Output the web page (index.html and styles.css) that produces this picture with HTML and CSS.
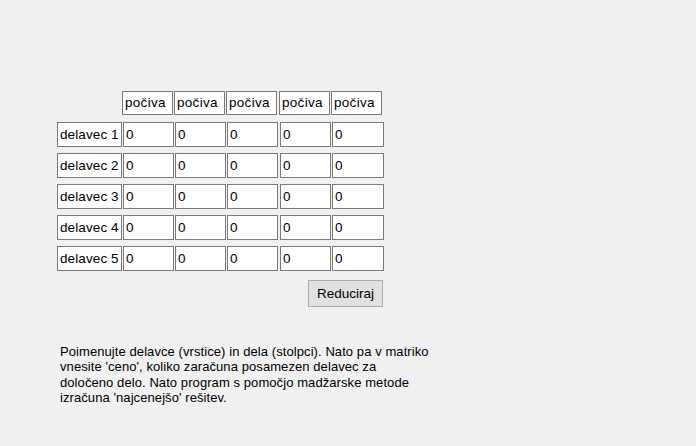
FILE: index.html
```html
<!DOCTYPE html>
<html lang="sl">
<head>
<meta charset="utf-8">
<title>Madžarska metoda</title>
<link rel="stylesheet" href="styles.css">
</head>
<body>
<div class="form">
  <div class="matrix">
    <div class="corner"></div>
    <div class="hdr">počiva</div>
    <div class="hdr">počiva</div>
    <div class="hdr">počiva</div>
    <div class="hdr">počiva</div>
    <div class="hdr">počiva</div>

    <div class="lbl">delavec 1</div>
    <input class="cell" value="0"><input class="cell" value="0"><input class="cell" value="0"><input class="cell" value="0"><input class="cell" value="0">

    <div class="lbl">delavec 2</div>
    <input class="cell" value="0"><input class="cell" value="0"><input class="cell" value="0"><input class="cell" value="0"><input class="cell" value="0">

    <div class="lbl">delavec 3</div>
    <input class="cell" value="0"><input class="cell" value="0"><input class="cell" value="0"><input class="cell" value="0"><input class="cell" value="0">

    <div class="lbl">delavec 4</div>
    <input class="cell" value="0"><input class="cell" value="0"><input class="cell" value="0"><input class="cell" value="0"><input class="cell" value="0">

    <div class="lbl">delavec 5</div>
    <input class="cell" value="0"><input class="cell" value="0"><input class="cell" value="0"><input class="cell" value="0"><input class="cell" value="0">
  </div>
  <div class="actions">
    <button class="btn" type="button">Reduciraj</button>
  </div>
  <p class="help">Poimenujte delavce (vrstice) in dela (stolpci). Nato pa v matriko<br>vnesite 'ceno', koliko zaračuna posamezen delavec za<br>določeno delo. Nato program s pomočjo madžarske metode<br>izračuna 'najcenejšo' rešitev.</p>
</div>
</body>
</html>
```
FILE: styles.css
```css
html, body {
  margin: 0;
  padding: 0;
  background: #f0f0f0;
}
body {
  width: 696px;
  height: 446px;
  overflow: hidden;
  font-family: "Liberation Sans", Arial, sans-serif;
  font-size: 13.5px;
  color: #000;
}
.form {
  padding: 91px 0 0 57px;
  box-sizing: border-box;
}
.matrix {
  display: grid;
  grid-template-columns: 66px 52px 52px 53px 52px 52px;
  grid-template-rows: 25px repeat(5, 25px);
  row-gap: 6px;
  width: 327px;
}
.hdr, .lbl {
  box-sizing: border-box;
  background: #fff;
  border: 1px solid #7a7a7a;
  padding: 0 0 0 2px;
  white-space: nowrap;
  overflow: hidden;
}
.hdr {
  width: 51px;
  height: 24px;
  line-height: 21px;
  margin-left: -1px;
  letter-spacing: 0.3px;
}
.lbl {
  width: 65px;
  line-height: 23px;
  letter-spacing: 0.1px;
}
.cell {
  box-sizing: border-box;
  width: 51px;
  height: 25px;
  margin: 0;
  border: 1px solid #7a7a7a;
  background: #fff;
  padding: 0 0 0 2px;
  font: 13.5px "Liberation Sans", Arial, sans-serif;
  color: #000;
  outline: none;
}
.cell:last-child,
.matrix > .cell:nth-child(6n) {
  width: 52px;
}
.actions {
  display: flex;
  justify-content: flex-end;
  width: 326px;
  padding-top: 9px;
}
.btn {
  box-sizing: border-box;
  width: 75px;
  height: 27px;
  margin: 0;
  padding: 0;
  background: #e1e1e1;
  border: 1px solid #adadad;
  font: 13.5px "Liberation Sans", Arial, sans-serif;
  color: #000;
}
.help {
  margin: 37px 0 0 3px;
  line-height: 15.4px;
  font-size: 13px;
  letter-spacing: 0.08px;
}
```
